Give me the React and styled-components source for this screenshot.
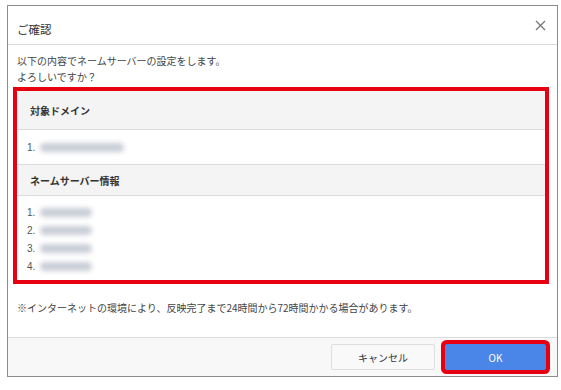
import styled, { createGlobalStyle } from 'styled-components';

const GlobalStyle = createGlobalStyle`
  html, body {
    margin: 0;
    background: #fff;
  }
  body {
    font-family: "Noto Sans CJK JP", "Noto Sans", sans-serif;
    color: #333;
  }
`;

const Page = styled.div`
  padding: 5px 4px 0 7px;
`;

const Dialog = styled.div`
  width: 551px;
  box-sizing: border-box;
  border: 1px solid #8c8c8c;
  background: #fff;
`;

const Header = styled.div`
  height: 38px;
  display: flex;
  align-items: center;
  justify-content: space-between;
  padding: 0 10px 0 9px;
  border-bottom: 1px solid #dcdcdc;
`;

const Title = styled.div`
  font-size: 11.5px;
  color: #333;
  padding-top: 7px;
`;

const Close = styled.button`
  border: none;
  background: none;
  padding: 0;
  width: 14px;
  height: 14px;
  display: flex;
  align-items: center;
  justify-content: center;
  cursor: pointer;
`;

const Body = styled.div`
  padding: 8px 12px 0 9px;
`;

const Lead = styled.p`
  margin: 0;
  font-size: 10px;
  line-height: 16px;
  color: #444;
`;

const Panel = styled.div`
  margin-top: 6px;
  box-shadow: 0 0 0 4px #e60012;
  background: #fff;
`;

const SectionHead = styled.div`
  height: ${p => p.$h}px;
  display: flex;
  align-items: center;
  padding-left: 13px;
  background: #f4f4f4;
  border-bottom: 1px solid #dcdcdc;
  font-size: 10px;
  font-weight: bold;
  color: #333;
`;

const DomainRow = styled.div`
  height: 34px;
  display: flex;
  align-items: center;
  padding-left: 10px;
  border-bottom: 1px solid #dcdcdc;
`;

const List = styled.ol`
  margin: 0;
  padding: 7px 0 5px 10px;
  list-style: none;
`;

const Item = styled.li`
  height: 18px;
  display: flex;
  align-items: center;
`;

const Num = styled.span`
  font-family: "Liberation Sans", sans-serif;
  font-size: 10px;
  color: #555;
  width: 13px;
`;

const Masked = styled.span`
  display: inline-block;
  width: ${p => p.$w}px;
  height: 9px;
  border-radius: 5px;
  background: #c9cdd6;
  filter: blur(2.5px);
`;

const Note = styled.p`
  margin: 19px 0 0;
  padding-bottom: 21px;
  font-size: 10px;
  line-height: 17px;
  color: #444;
`;

const Footer = styled.div`
  height: 38px;
  display: flex;
  align-items: center;
  justify-content: flex-end;
  gap: 10px;
  padding-right: 11px;
  border-top: 1px solid #dcdcdc;
  background: #f8f8f8;
`;

const Button = styled.button`
  height: 26px;
  width: ${p => p.$w}px;
  box-sizing: border-box;
  font-family: "Noto Sans CJK JP", "Liberation Sans", sans-serif;
  font-size: 10px;
  border-radius: 2px;
  cursor: pointer;
  border: 1px solid ${p => (p.$primary ? '#4a86e8' : '#dedede')};
  background: ${p => (p.$primary ? '#4a86e8' : '#f9f9f9')};
  color: ${p => (p.$primary ? '#fff' : '#333')};
  box-shadow: ${p => (p.$primary ? '0 0 0 4px #e60012' : 'none')};
`;

const servers = [1, 2, 3, 4];

export default function App() {
  return (
    <Page>
      <GlobalStyle />
      <Dialog>
        <Header>
          <Title>ご確認</Title>
          <Close aria-label="閉じる">
            <svg width="11" height="11" viewBox="0 0 11 11">
              <path d="M1 1L10 10M10 1L1 10" stroke="#777" strokeWidth="1.3" />
            </svg>
          </Close>
        </Header>
        <Body>
          <Lead>
            以下の内容でネームサーバーの設定をします。
            <br />
            よろしいですか？
          </Lead>
          <Panel>
            <SectionHead $h={38}>対象ドメイン</SectionHead>
            <DomainRow>
              <Num>1.</Num>
              <Masked $w={84} />
            </DomainRow>
            <SectionHead $h={30}>ネームサーバー情報</SectionHead>
            <List>
              {servers.map(n => (
                <Item key={n}>
                  <Num>{n}.</Num>
                  <Masked $w={52} />
                </Item>
              ))}
            </List>
          </Panel>
          <Note>※インターネットの環境により、反映完了まで24時間から72時間かかる場合があります。</Note>
        </Body>
        <Footer>
          <Button $w={104}>キャンセル</Button>
          <Button $w={101} $primary>OK</Button>
        </Footer>
      </Dialog>
    </Page>
  );
}
